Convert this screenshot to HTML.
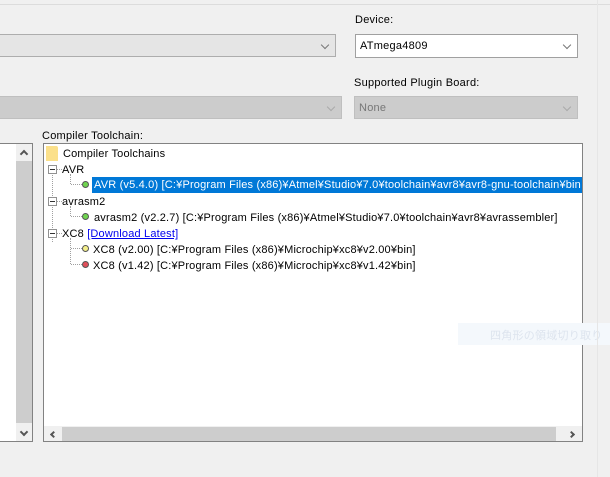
<!DOCTYPE html>
<html><head><meta charset="utf-8"><style>
*{margin:0;padding:0;box-sizing:border-box}
body{width:610px;height:477px;background:#f0f0f0;position:relative;overflow:hidden;font-family:"Liberation Sans","Noto Sans CJK JP",sans-serif;font-size:11px;color:#000;letter-spacing:0.25px}
.a{position:absolute;white-space:nowrap}
.cb{position:absolute;border:1px solid #adadad;background:#e5e5e5}
.arr{position:absolute;right:7px;top:7px;width:6px;height:6px;border-right:1px solid #777;border-bottom:1px solid #777;transform:rotate(45deg)}
.t{position:absolute;white-space:nowrap;font-size:11px;line-height:15px;letter-spacing:0.18px}
.dot{position:absolute;width:7px;height:7px;border-radius:50%;border:1px solid #555}
.box{position:absolute;width:9px;height:9px;border:1px solid #919191;background:#fff}
.box:after{content:"";position:absolute;left:1px;top:3px;width:5px;height:1px;background:#333}
.vl{position:absolute;border-left:1px dotted #a0a0a0}
.hl{position:absolute;border-top:1px dotted #a0a0a0}
</style></head><body>
<div class="a" style="left:0;top:4px;width:610px;height:1px;background:#dcdcdc"></div>
<div class="a" style="left:355px;top:14px">Device:</div>
<div class="cb" style="left:-2px;top:34px;width:338px;height:23px"><span class="arr"></span></div>
<div class="cb" style="left:355px;top:34px;width:223px;height:24px;background:#fff;border-color:#a0a0a0"><span class="a" style="left:4px;top:5px">ATmega4809</span><span class="arr"></span></div>
<div class="a" style="left:354px;top:77px">Supported Plugin Board:</div>
<div class="cb" style="left:-2px;top:96px;width:344px;height:23px;background:#cccccc;border-color:#bfbfbf"><span class="arr" style="border-color:#aaa"></span></div>
<div class="cb" style="left:354px;top:96px;width:224px;height:23px;background:#cccccc;border-color:#bfbfbf"><span class="a" style="left:4px;top:5px;color:#777">None</span><span class="arr" style="border-color:#aaa"></span></div>
<div class="a" style="left:42px;top:130px">Compiler Toolchain:</div>
<div class="a" style="left:-1px;top:143px;width:34px;height:299px;background:#fff;border:1px solid #828282">
 <div class="a" style="left:16px;top:0;width:16px;height:297px;background:#f0f0f0"></div>
 <div class="a" style="left:16px;top:17px;width:16px;height:262px;background:#cdcdcd"></div>
 <div class="a" style="left:21px;top:7px;width:6px;height:6px;border-left:2px solid #555;border-top:2px solid #555;transform:rotate(45deg)"></div>
 <div class="a" style="left:21px;top:285px;width:6px;height:6px;border-right:2px solid #555;border-bottom:2px solid #555;transform:rotate(45deg)"></div>
</div>
<div class="a" style="left:43px;top:143px;width:540px;height:299px;background:#fff;border:1px solid #828282;overflow:hidden">
 <div class="a" style="left:2px;top:2px;width:12px;height:15px;background:#fbe08a;border-top-right-radius:2px"></div>
 <div class="t" style="left:19px;top:3px">Compiler Toolchains</div>
 <div class="vl" style="left:8px;top:23px;height:75px"></div>
 <div class="box" style="left:4px;top:21px"></div>
 <div class="hl" style="left:13px;top:25px;width:5px"></div>
 <div class="t" style="left:18px;top:19px">AVR</div>
 <div class="vl" style="left:26px;top:30px;height:10px"></div>
 <div class="hl" style="left:27px;top:40px;width:11px"></div>
 <div class="dot" style="left:38px;top:37px;background:#6fd44f"></div>
 <div class="a" style="left:48px;top:33px;width:490px;height:16px;background:#0078d7;overflow:hidden">
  <div class="t" style="left:2px;top:1px;color:#fff">AVR (v5.4.0) [C:¥Program Files (x86)¥Atmel¥Studio¥7.0¥toolchain¥avr8¥avr8-gnu-toolchain¥bin</div>
 </div>
 <div class="box" style="left:4px;top:53px"></div>
 <div class="hl" style="left:13px;top:57px;width:5px"></div>
 <div class="t" style="left:18px;top:51px">avrasm2</div>
 <div class="vl" style="left:26px;top:62px;height:10px"></div>
 <div class="hl" style="left:27px;top:72px;width:11px"></div>
 <div class="dot" style="left:38px;top:69px;background:#6fd44f"></div>
 <div class="t" style="left:50px;top:67px">avrasm2 (v2.2.7) [C:¥Program Files (x86)¥Atmel¥Studio¥7.0¥toolchain¥avr8¥avrassembler]</div>
 <div class="box" style="left:4px;top:85px"></div>
 <div class="hl" style="left:13px;top:89px;width:5px"></div>
 <div class="t" style="left:18px;top:83px">XC8 <span style="color:#0000ee;text-decoration:underline">[Download Latest]</span></div>
 <div class="vl" style="left:26px;top:94px;height:26px"></div>
 <div class="hl" style="left:27px;top:104px;width:11px"></div>
 <div class="dot" style="left:38px;top:101px;background:#f4ef8a"></div>
 <div class="t" style="left:49px;top:99px">XC8 (v2.00) [C:¥Program Files (x86)¥Microchip¥xc8¥v2.00¥bin]</div>
 <div class="hl" style="left:27px;top:120px;width:11px"></div>
 <div class="dot" style="left:38px;top:117px;background:#e0505a"></div>
 <div class="t" style="left:49px;top:115px">XC8 (v1.42) [C:¥Program Files (x86)¥Microchip¥xc8¥v1.42¥bin]</div>
 <div class="a" style="left:0;top:282px;width:538px;height:16px;background:#f0f0f0"></div>
 <div class="a" style="left:18px;top:283px;width:494px;height:15px;background:#cdcdcd"></div>
 <div class="a" style="left:7px;top:288px;width:5px;height:5px;border-left:2px solid #555;border-bottom:2px solid #555;transform:rotate(45deg)"></div>
 <div class="a" style="left:525px;top:288px;width:5px;height:5px;border-right:2px solid #555;border-top:2px solid #555;transform:rotate(45deg)"></div>
</div>
<div class="a" style="left:458px;top:323px;width:152px;height:22px;background:#f4f8fc"><span class="a" style="left:32px;top:4px;color:#dde4ee;font-size:11px">四角形の領域切り取り</span></div>
<div class="a" style="left:597px;top:0;width:1px;height:477px;background:#e6e6e6"></div>
</body></html>
